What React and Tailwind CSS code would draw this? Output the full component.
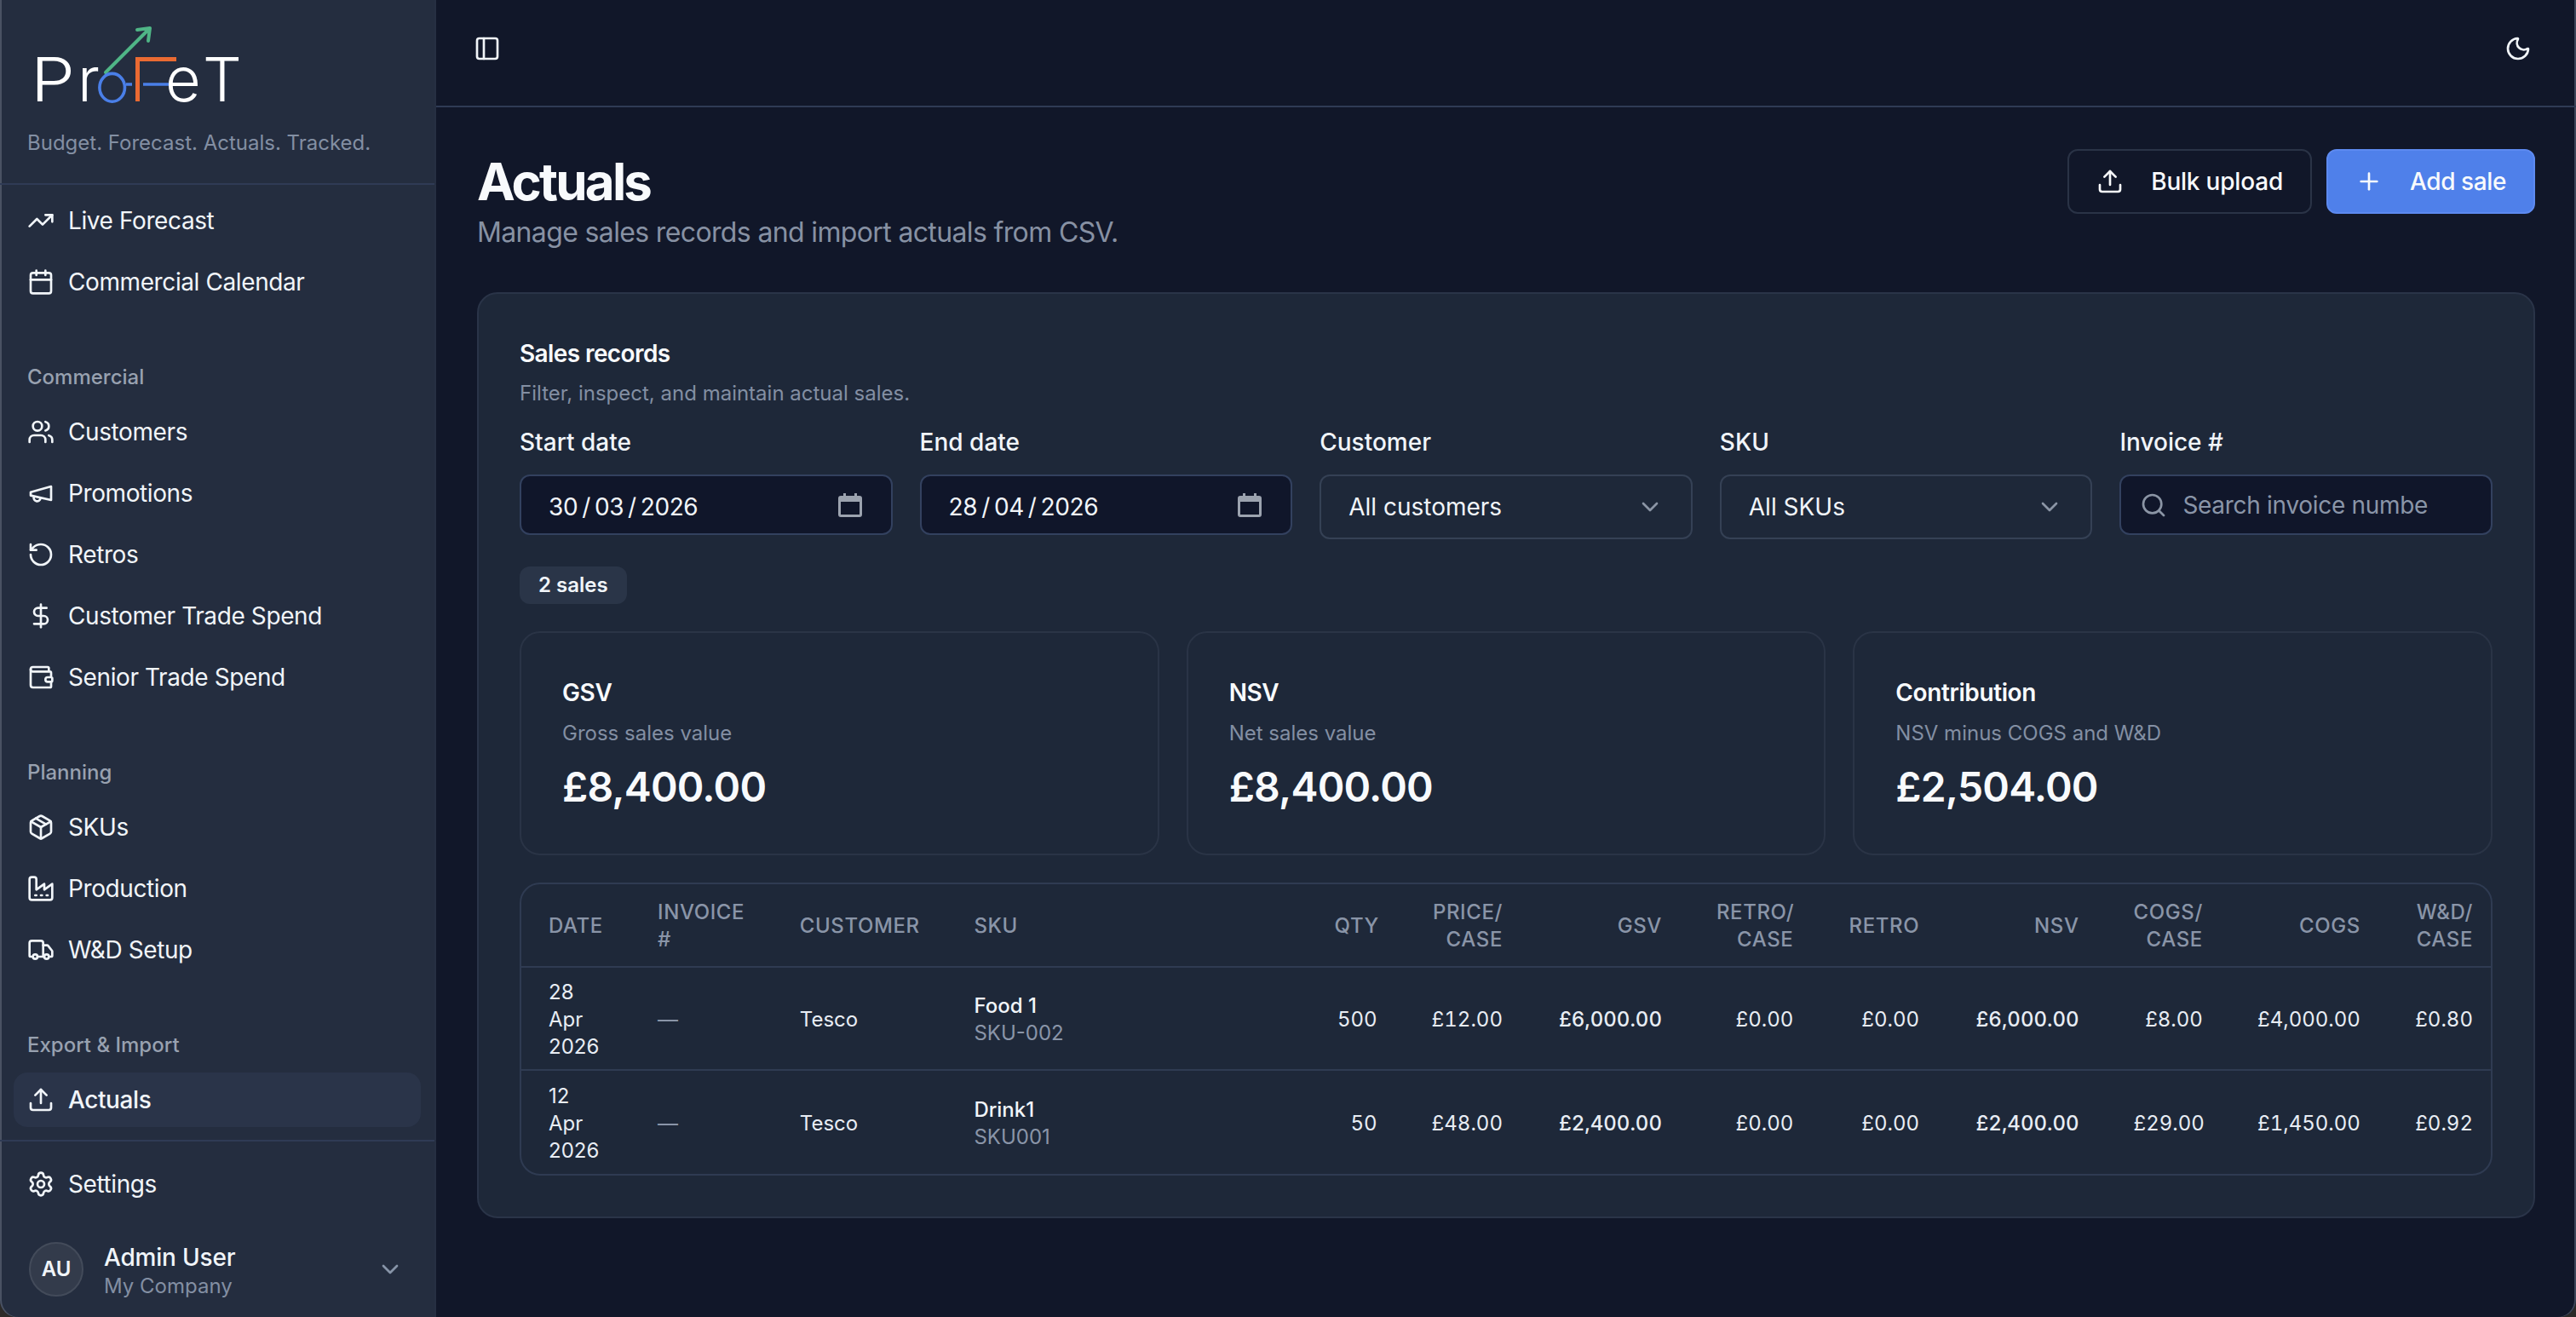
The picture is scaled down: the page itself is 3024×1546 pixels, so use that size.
import React from 'react'
import {
  TrendingUp, Calendar, Users, RotateCcw, DollarSign, Wallet, Package, Truck,
  Upload, Settings, ChevronDown, PanelLeft, Moon, Plus, Search,
} from 'lucide-react'

// older lucide drawings, the package's current ones differ from the screenshot
function MegaphoneIcon({ className }) {
  return (
    <svg viewBox="0 0 24 24" fill="none" stroke="currentColor" strokeWidth="2" strokeLinecap="round" strokeLinejoin="round" className={className}>
      <path d="m3 11 18-5v12L3 14v-3z" />
      <path d="M11.6 16.8a3 3 0 1 1-5.8-1.6" />
    </svg>
  )
}

function FactoryIcon({ className }) {
  return (
    <svg viewBox="0 0 24 24" fill="none" stroke="currentColor" strokeWidth="2" strokeLinecap="round" strokeLinejoin="round" className={className}>
      <path d="M2 20a2 2 0 0 0 2 2h16a2 2 0 0 0 2-2V8l-7 5V8l-7 5V4a2 2 0 0 0-2-2H4a2 2 0 0 0-2 2Z" />
      <path d="M17 18h1" />
      <path d="M12 18h1" />
      <path d="M7 18h1" />
    </svg>
  )
}

const navGroups = [
  { items: [{ label: 'Live Forecast', icon: TrendingUp }, { label: 'Commercial Calendar', icon: Calendar }] },
  {
    title: 'Commercial',
    items: [
      { label: 'Customers', icon: Users },
      { label: 'Promotions', icon: MegaphoneIcon },
      { label: 'Retros', icon: RotateCcw },
      { label: 'Customer Trade Spend', icon: DollarSign },
      { label: 'Senior Trade Spend', icon: Wallet },
    ],
  },
  {
    title: 'Planning',
    items: [
      { label: 'SKUs', icon: Package },
      { label: 'Production', icon: FactoryIcon },
      { label: 'W&D Setup', icon: Truck },
    ],
  },
  { title: 'Export & Import', items: [{ label: 'Actuals', icon: Upload, active: true }] },
]

const metrics = [
  { title: 'GSV', desc: 'Gross sales value', value: '£8,400.00' },
  { title: 'NSV', desc: 'Net sales value', value: '£8,400.00' },
  { title: 'Contribution', desc: 'NSV minus COGS and W&D', value: '£2,504.00' },
]

const rows = [
  {
    day: '28', month: 'Apr', year: '2026', customer: 'Tesco', name: 'Food 1', sku: 'SKU-002', qty: '500',
    price: '£12.00', gsv: '£6,000.00', retroCase: '£0.00', retro: '£0.00', nsv: '£6,000.00',
    cogsCase: '£8.00', cogs: '£4,000.00', wd: '£0.80',
  },
  {
    day: '12', month: 'Apr', year: '2026', customer: 'Tesco', name: 'Drink1', sku: 'SKU001', qty: '50',
    price: '£48.00', gsv: '£2,400.00', retroCase: '£0.00', retro: '£0.00', nsv: '£2,400.00',
    cogsCase: '£29.00', cogs: '£1,450.00', wd: '£0.92',
  },
]

function Logo() {
  return (
    <svg viewBox="34 16 260 124" className="h-[62px] w-[130px]">
      <g fill="#ffffff" fontFamily="Inter, sans-serif" fontWeight="300" fontSize="72">
        <text x="36" y="119" textLength="52" lengthAdjust="spacingAndGlyphs">P</text>
        <text x="91" y="119">r</text>
        <text x="194" y="119">e</text>
        <text x="238" y="119">T</text>
      </g>
      <path d="M124 85 L176 33 M161 35 L176 33 L174 48" fill="none" stroke="#4fb586" strokeWidth="4" strokeLinecap="round" strokeLinejoin="round" />
      <ellipse cx="131.7" cy="102.8" rx="14.8" ry="16.4" fill="none" stroke="#4a7fe8" strokeWidth="3.6" />
      <path d="M148 99 H155 M168 99 H198" stroke="#4a7fe8" strokeWidth="3.6" />
      <path d="M161.5 119 V69.5 H207" fill="none" stroke="#ea6a32" strokeWidth="5" />
    </svg>
  )
}

function NavItem({ label, icon: Icon, active }) {
  return (
    <a className={`flex h-8 items-center gap-2 rounded-lg px-2 text-sm tracking-[-0.2px] text-[#f1f5f9] ${active ? 'bg-[#2a3449] font-medium' : ''}`}>
      <Icon className="h-4 w-4 shrink-0" />
      <span>{label}</span>
    </a>
  )
}

function Sidebar() {
  return (
    <aside className="flex w-64 shrink-0 flex-col rounded-bl-[10px] border-r border-[#262f42] bg-[#242d3f] shadow-[inset_1px_0_0_#4a5263]">
      <div className="h-[108.5px] shrink-0 border-b border-[#2f3b55] pl-[16px] pt-2">
        <div className="pl-px"><Logo /></div>
        <p className="mt-[6px] text-xs leading-4 text-[#838fa3]">Budget. Forecast. Actuals. Tracked.</p>
      </div>
      <nav className="flex flex-1 flex-col gap-6 px-2 pt-[5px]">
        {navGroups.map((group, i) => (
          <div key={i}>
            {group.title && <div className="flex h-8 items-center px-2 text-xs font-medium text-[#98a1b0]">{group.title}</div>}
            <div className="flex flex-col gap-1">
              {group.items.map((item) => <NavItem key={item.label} {...item} />)}
            </div>
          </div>
        ))}
      </nav>
      <div className="shrink-0 border-t border-[#2f3b55] px-2 pb-1 pt-[9px]">
        <NavItem label="Settings" icon={Settings} />
        <div className="mt-[10px] flex h-12 items-center gap-3 pl-[9px] pr-[10px]">
          <div className="flex h-8 w-8 shrink-0 items-center justify-center rounded-full border border-[#434b5a] bg-[#333b4b] text-xs font-semibold text-[#f1f5f9]">AU</div>
          <div className="min-w-0 flex-1 pt-[2px]">
            <div className="text-sm font-medium leading-[18px] tracking-[-0.1px] text-[#f1f5f9]">Admin User</div>
            <div className="text-xs leading-4 text-[#838fa3]">My Company</div>
          </div>
          <ChevronDown className="h-4 w-4 text-[#8794a8]" />
        </div>
      </div>
    </aside>
  )
}

function FieldLabel({ children }) {
  return <label className="mb-[9px] block text-sm font-medium leading-5 text-[#f1f5f9]">{children}</label>
}

function DateField({ label, day, month, year }) {
  return (
    <div>
      <FieldLabel>{label}</FieldLabel>
      <div className="flex h-[35.5px] items-center justify-between rounded-md border border-[#33415f] bg-[#10162a] pl-[13.5px] pr-[17px] text-sm tracking-[-0.2px] text-[#f1f5f9]">
        <span className="pt-[2px]"><span className="px-[2.5px]">{day}</span>/<span className="px-[2.5px]">{month}</span>/<span className="px-[2.5px]">{year}</span></span>
        <svg viewBox="0 0 14 14" className="h-[14px] w-[14px] text-[#9ca3af]" fill="currentColor">
          <path d="M3 0h1.5v1.5h5V0H11v1.5h1.5A1.5 1.5 0 0 1 14 3v9.5a1.5 1.5 0 0 1-1.5 1.5h-11A1.5 1.5 0 0 1 0 12.5V3a1.5 1.5 0 0 1 1.5-1.5H3zM1.5 5v7.5h11V5z" />
        </svg>
      </div>
    </div>
  )
}

function SelectField({ label, value }) {
  return (
    <div>
      <FieldLabel>{label}</FieldLabel>
      <button className="flex h-[38px] w-full items-center justify-between rounded-md border border-[#354155] bg-[#1e2839] px-4 text-sm text-[#f1f5f9]">
        <span>{value}</span>
        <ChevronDown className="h-4 w-4 text-[#8b95a5]" />
      </button>
    </div>
  )
}

const colWidths = ['w-[64px]', 'w-[83.4px]', 'w-[102.3px]', 'w-[211.6px]', 'w-[57px]', 'w-[73.7px]', 'w-[93.5px]', 'w-[77.2px]', 'w-[73.9px]', 'w-[93.7px]', 'w-[72.7px]', 'w-[92.5px]', 'w-[66px]']

function Th({ children, right }) {
  return <th className={`px-4 pt-px text-xs font-medium uppercase leading-4 tracking-[0.3px] text-[#8a95a8] ${right ? 'text-right' : 'text-left'}`}>{children}</th>
}

function SalesTable() {
  return (
    <div className="overflow-hidden rounded-xl border border-[#2f3b52]">
      <table className="w-[1161.5px] table-fixed border-collapse">
        <colgroup>
          {colWidths.map((w, i) => <col key={i} className={w} />)}
        </colgroup>
        <thead>
          <tr className="h-[48.5px] border-b border-[#2f3b52]">
            <Th>Date</Th>
            <Th>Invoice<br />#</Th>
            <Th>Customer</Th>
            <Th>SKU</Th>
            <Th right>Qty</Th>
            <Th right>Price/<br />Case</Th>
            <Th right>GSV</Th>
            <Th right>Retro/<br />Case</Th>
            <Th right>Retro</Th>
            <Th right>NSV</Th>
            <Th right>COGS/<br />Case</Th>
            <Th right>COGS</Th>
            <Th right>W&amp;D/<br />Case</Th>
          </tr>
        </thead>
        <tbody className="text-xs leading-4 text-[#e8edf4]">
          {rows.map((r, i) => (
            <tr key={i} className={`h-[60.7px] ${i === 0 ? 'border-b border-[#2f3b52]' : ''}`}>
              <td className="px-4 pt-px">{r.day}<br />{r.month}<br />{r.year}</td>
              <td className="px-4 pt-px text-[#8a95a8]">—</td>
              <td className="px-4 pt-px">{r.customer}</td>
              <td className="px-4 pt-px">
                <div className="font-medium text-[#f1f5f9]">{r.name}</div>
                <div className="text-[#8a95a8]">{r.sku}</div>
              </td>
              <td className="px-4 pt-px text-right tabular-nums">{r.qty}</td>
              <td className="px-4 pt-px text-right tabular-nums">{r.price}</td>
              <td className="px-4 pt-px text-right font-medium tabular-nums">{r.gsv}</td>
              <td className="px-4 pt-px text-right tabular-nums">{r.retroCase}</td>
              <td className="px-4 pt-px text-right tabular-nums">{r.retro}</td>
              <td className="px-4 pt-px text-right font-medium tabular-nums">{r.nsv}</td>
              <td className="px-4 pt-px text-right tabular-nums">{r.cogsCase}</td>
              <td className="px-4 pt-px text-right tabular-nums">{r.cogs}</td>
              <td className="px-4 pt-px text-right tabular-nums">{r.wd}</td>
            </tr>
          ))}
        </tbody>
      </table>
    </div>
  )
}

export default function App() {
  return (
    <div className="h-[773px] w-[1512px] overflow-hidden bg-[#2c2a28] font-[Inter,sans-serif] [zoom:2]">
      <div className="flex h-full">
        <Sidebar />
        <main className="flex min-w-0 flex-1 flex-col rounded-br-[10px] bg-[#111729] shadow-[inset_-1px_0_0_#3d4659]">
          <header className="flex h-[63px] shrink-0 items-start justify-between border-b border-[#2f3b55] pl-[14px] pr-[18px] pt-[12.5px] text-[#f1f5f9]">
            <button className="flex h-8 w-8 items-center justify-center"><PanelLeft className="h-4 w-4" /></button>
            <button className="flex h-8 w-8 items-center justify-center"><Moon className="h-4 w-4" /></button>
          </header>
          <div className="flex flex-1 flex-col px-6">
            <div className="flex items-start justify-between pt-[24.5px]">
              <div className="pt-px">
                <h1 className="text-3xl font-bold leading-9 tracking-[-1.4px] text-[#f8fafc]">Actuals</h1>
                <p className="text-base leading-6 tracking-[-0.32px] text-[#8791a3]">Manage sales records and import actuals from CSV.</p>
              </div>
              <div className="flex gap-[8.5px]">
                <button className="flex h-[38px] items-center gap-4 rounded-md border border-[#2a3346] px-4 text-sm font-medium tracking-[-0.1px] text-[#f8fafc]">
                  <Upload className="h-4 w-4" />Bulk upload
                </button>
                <button className="flex h-[38px] items-center gap-4 rounded-md border border-[#5d8af0] bg-[#4f80ea] px-4 text-sm font-medium tracking-[-0.2px] text-[#f8fafc]">
                  <Plus className="h-4 w-4" />Add sale
                </button>
              </div>
            </div>
            <section className="mt-[23px] rounded-xl border border-[#2a3448] bg-[#1e2839] px-6 pb-6 pt-[25px]">
              <h2 className="text-sm font-semibold leading-5 tracking-[-0.3px] text-[#f8fafc]">Sales records</h2>
              <p className="mt-[5.5px] text-xs leading-4 text-[#838fa3]">Filter, inspect, and maintain actual sales.</p>
              <div className="mt-[10.5px] grid grid-cols-5 gap-4">
                <DateField label="Start date" day="30" month="03" year="2026" />
                <DateField label="End date" day="28" month="04" year="2026" />
                <SelectField label="Customer" value="All customers" />
                <SelectField label="SKU" value="All SKUs" />
                <div>
                  <FieldLabel>Invoice #</FieldLabel>
                  <div className="relative">
                    <Search className="absolute left-3 top-[10px] h-4 w-4 text-[#8b95a5]" />
                    <input placeholder="Search invoice number" className="h-[35.5px] w-full rounded-md border border-[#33415f] bg-[#10162a] pl-[36px] pr-9 text-sm tracking-[-0.15px] text-[#f1f5f9] placeholder:text-[#8a95a8]" />
                  </div>
                </div>
              </div>
              <span className="mt-[16px] inline-flex h-[22px] items-center rounded-md bg-[#2a3548] px-[11px] text-xs font-semibold text-[#f1f5f9]">2 sales</span>
              <div className="mt-[16px] grid grid-cols-3 gap-4">
                {metrics.map((m) => (
                  <div key={m.title} className="rounded-xl border border-[#2a3446] px-6 pb-[23px] pt-[25px]">
                    <div className="text-sm font-semibold leading-5 tracking-[-0.2px] text-[#f8fafc]">{m.title}</div>
                    <div className="mt-[6px] text-xs leading-4 text-[#838fa3]">{m.desc}</div>
                    <div className="mt-[7.5px] text-2xl font-semibold leading-8 tracking-[-0.4px] text-[#f8fafc]">{m.value}</div>
                  </div>
                ))}
              </div>
              <div className="mt-4"><SalesTable /></div>
            </section>
          </div>
        </main>
      </div>
    </div>
  )
}
